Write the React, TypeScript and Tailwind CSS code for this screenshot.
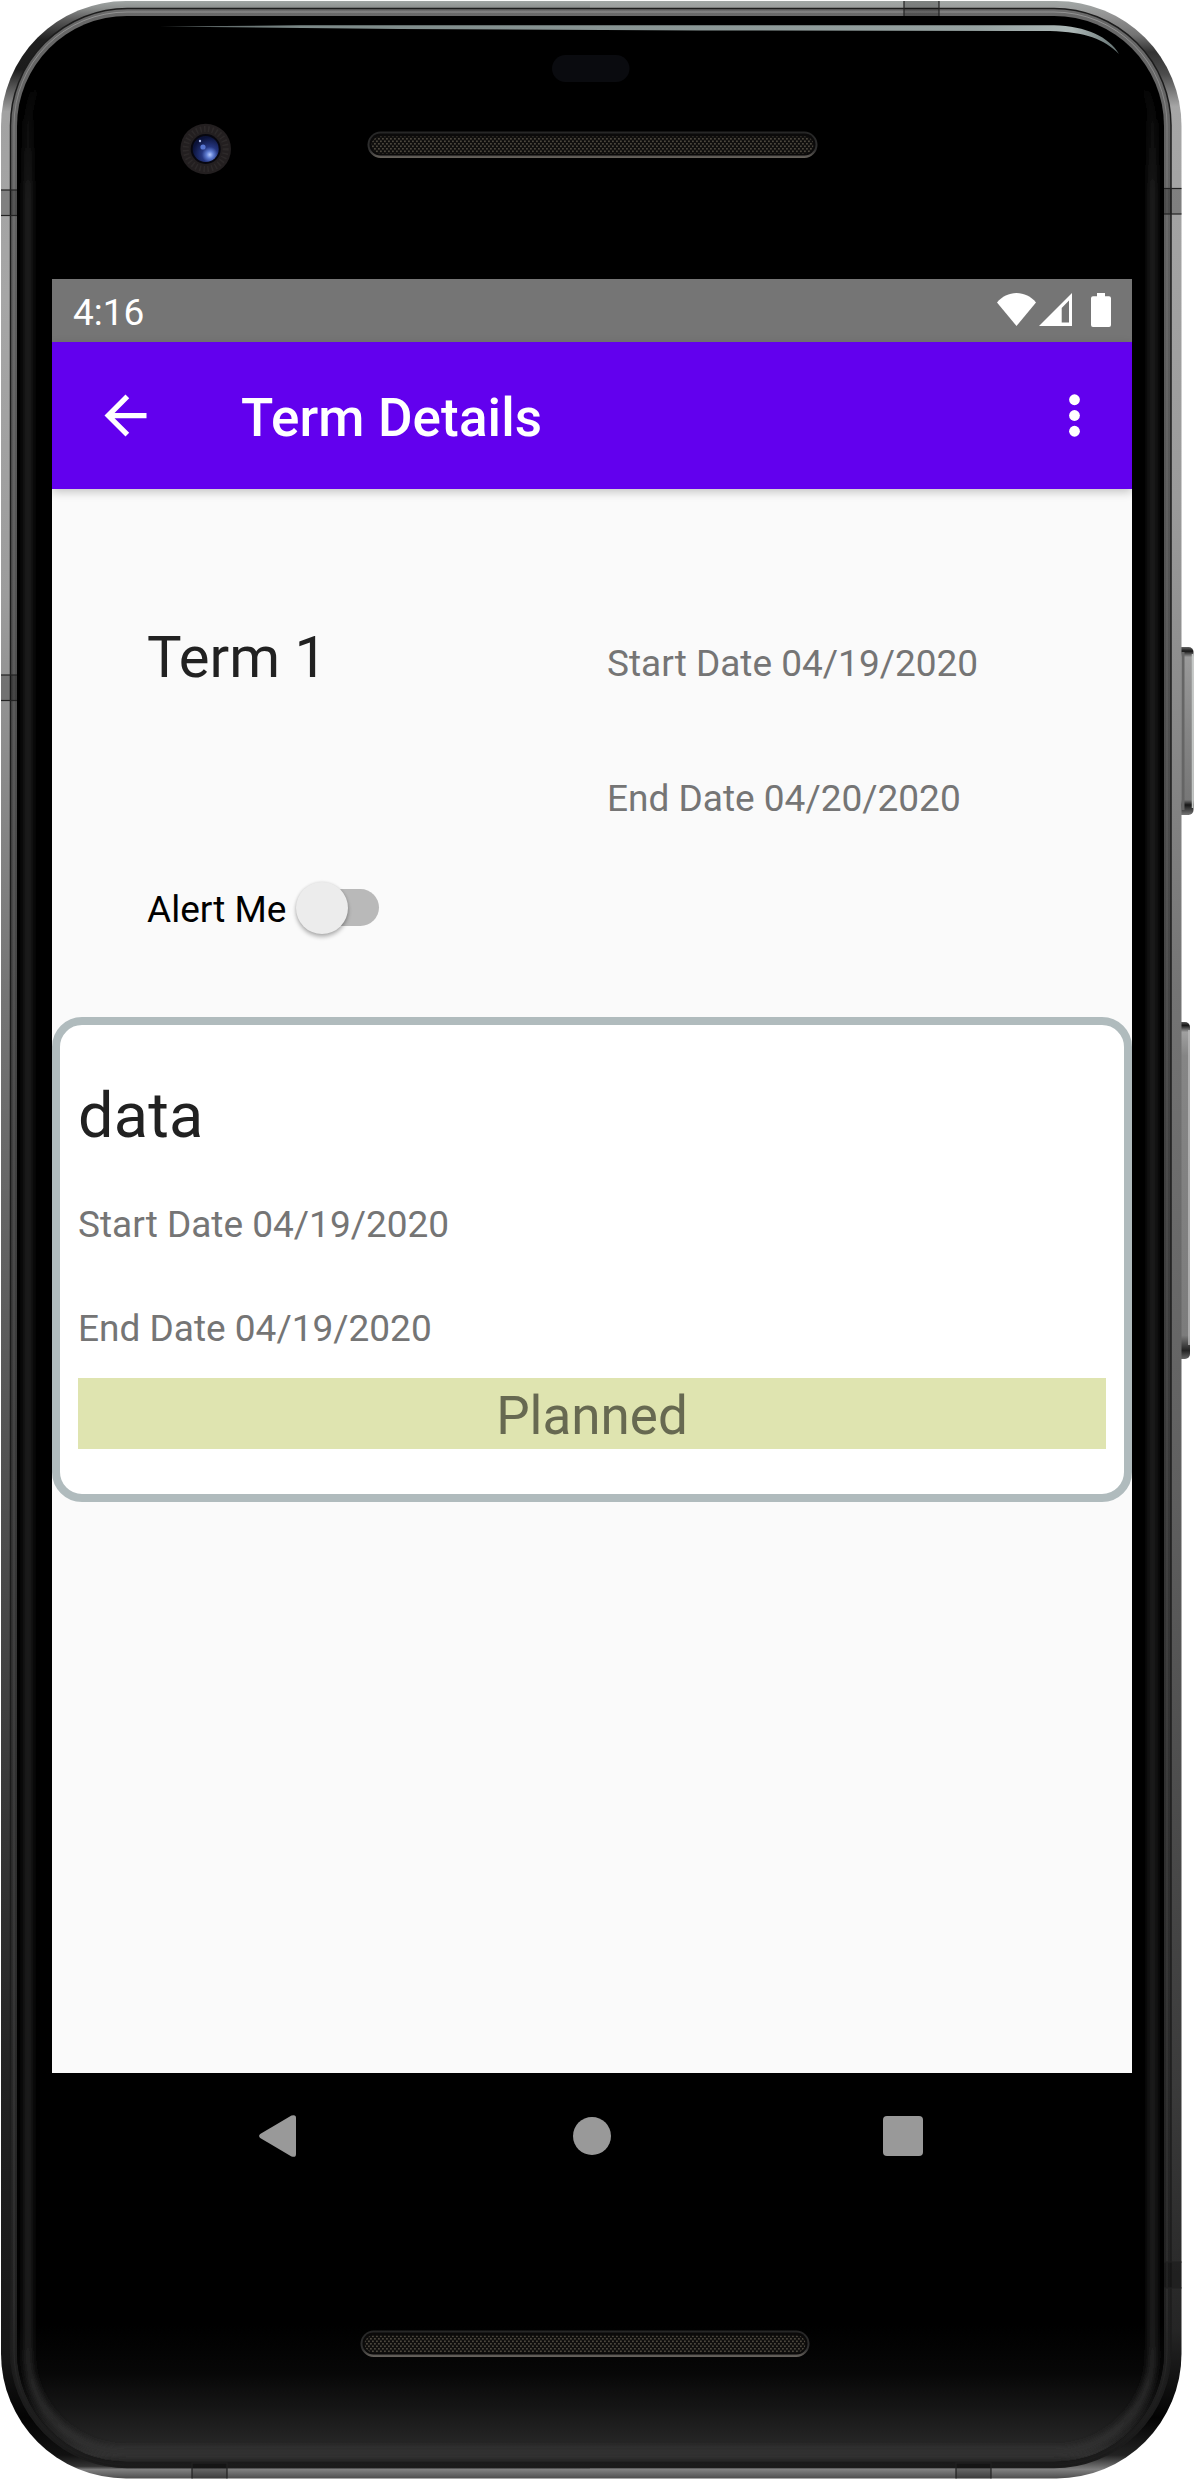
import React from "react";

function SpeakerGrille({ x, y, width }: { x: number; y: number; width: number }) {
  return (
    <g>
      <rect x={x} y={y} width={width} height="26.5" rx="13.25" fill="url(#grilleRim)" />
      <rect x={x + 2} y={y + 2} width={width - 4} height="22" rx="11" fill="#0b0a0a" />
      <rect x={x + 4} y={y + 5} width={width - 8} height="17" rx="8.5" fill="url(#mesh)" />
    </g>
  );
}

function Hardware() {
  return (
    <svg className="absolute inset-0" width="1194" height="2480" viewBox="0 0 1194 2480" aria-hidden="true">
      <defs>
        <linearGradient id="metalLeft" gradientUnits="userSpaceOnUse" x1="0" y1="0" x2="0" y2="2480">
          <stop offset="0" stopColor="#a3a9a7" />
          <stop offset="0.0032" stopColor="#8c8f8e" />
          <stop offset="0.008" stopColor="#5a5a5a" />
          <stop offset="0.016" stopColor="#1f1f1f" />
          <stop offset="0.028" stopColor="#1c1c1c" />
          <stop offset="0.045" stopColor="#a2a2a2" />
          <stop offset="0.12" stopColor="#a6a6a6" />
          <stop offset="0.24" stopColor="#9c9c9c" />
          <stop offset="0.4" stopColor="#757575" />
          <stop offset="0.6" stopColor="#505050" />
          <stop offset="0.84" stopColor="#222222" />
          <stop offset="0.95" stopColor="#161616" />
          <stop offset="0.975" stopColor="#040404" />
          <stop offset="0.99" stopColor="#111111" />
          <stop offset="0.9945" stopColor="#333333" />
          <stop offset="0.9958" stopColor="#808080" />
          <stop offset="1" stopColor="#454545" />
        </linearGradient>
        <linearGradient id="metalRight" gradientUnits="userSpaceOnUse" x1="0" y1="0" x2="0" y2="2480">
          <stop offset="0" stopColor="#a3a9a7" />
          <stop offset="0.006" stopColor="#949494" />
          <stop offset="0.014" stopColor="#747474" />
          <stop offset="0.021" stopColor="#333333" />
          <stop offset="0.03" stopColor="#4c4c4c" />
          <stop offset="0.043" stopColor="#a6a6a6" />
          <stop offset="0.2" stopColor="#9b9b9b" />
          <stop offset="0.4" stopColor="#747474" />
          <stop offset="0.6" stopColor="#606060" />
          <stop offset="0.84" stopColor="#3b3b3b" />
          <stop offset="0.94" stopColor="#252525" />
          <stop offset="0.975" stopColor="#030303" />
          <stop offset="0.99" stopColor="#222222" />
          <stop offset="0.9958" stopColor="#808080" />
          <stop offset="1" stopColor="#454545" />
        </linearGradient>
        <linearGradient id="innerRim" gradientUnits="userSpaceOnUse" x1="0" y1="0" x2="0" y2="2480">
          <stop offset="0" stopColor="#777777" />
          <stop offset="0.006" stopColor="#686868" />
          <stop offset="0.4" stopColor="#454545" />
          <stop offset="0.8" stopColor="#2c2c2c" />
          <stop offset="1" stopColor="#1a1a1a" />
        </linearGradient>
        <linearGradient id="rimLine" gradientUnits="userSpaceOnUse" x1="0" y1="0" x2="0" y2="2480">
          <stop offset="0" stopColor="#b0b0b0" stopOpacity="0.6" />
          <stop offset="0.1" stopColor="#8a8a8a" stopOpacity="0.45" />
          <stop offset="0.6" stopColor="#6a6a6a" stopOpacity="0.4" />
          <stop offset="0.93" stopColor="#555555" stopOpacity="0.4" />
          <stop offset="0.97" stopColor="#222222" stopOpacity="0.3" />
        </linearGradient>
        <linearGradient id="bottomGlow" x1="0" y1="0" x2="0" y2="1">
          <stop offset="0" stopColor="#000000" />
          <stop offset="0.35" stopColor="#070707" />
          <stop offset="0.6" stopColor="#151515" />
          <stop offset="0.85" stopColor="#252525" />
          <stop offset="0.95" stopColor="#303030" />
          <stop offset="1" stopColor="#222222" />
        </linearGradient>
        <linearGradient id="edgeGlow" gradientUnits="userSpaceOnUse" x1="0" y1="0" x2="0" y2="2480">
          <stop offset="0.03" stopColor="#222222" stopOpacity="0" />
          <stop offset="0.08" stopColor="#222222" />
          <stop offset="0.94" stopColor="#222222" />
          <stop offset="0.98" stopColor="#303030" />
        </linearGradient>
        <filter id="soften" filterUnits="userSpaceOnUse" x="0" y="0" width="1194" height="2480">
          <feGaussianBlur stdDeviation="3" />
        </filter>
        <linearGradient id="grilleRim" x1="0" y1="0" x2="0" y2="1">
          <stop offset="0" stopColor="#262626" />
          <stop offset="0.7" stopColor="#303030" />
          <stop offset="1" stopColor="#68635d" />
        </linearGradient>
        <linearGradient id="shine" gradientUnits="userSpaceOnUse" x1="160" y1="0" x2="1120" y2="0">
          <stop offset="0" stopColor="#50595a" />
          <stop offset="0.15" stopColor="#7c8988" />
          <stop offset="0.85" stopColor="#96a2a1" />
          <stop offset="0.95" stopColor="#acb7b6" />
          <stop offset="1" stopColor="#627070" />
        </linearGradient>
        <linearGradient id="button" x1="0" y1="0" x2="0" y2="1">
          <stop offset="0" stopColor="#666666" />
          <stop offset="0.025" stopColor="#161616" />
          <stop offset="0.06" stopColor="#9a9a9a" />
          <stop offset="0.5" stopColor="#858585" />
          <stop offset="0.91" stopColor="#777777" />
          <stop offset="0.94" stopColor="#161616" />
          <stop offset="1" stopColor="#777777" />
        </linearGradient>
        <linearGradient id="longButton" x1="0" y1="0" x2="0" y2="1">
          <stop offset="0" stopColor="#555555" />
          <stop offset="0.01" stopColor="#161616" />
          <stop offset="0.03" stopColor="#a0a0a0" />
          <stop offset="0.1" stopColor="#858585" />
          <stop offset="0.93" stopColor="#7c7c7c" />
          <stop offset="0.975" stopColor="#222222" />
          <stop offset="1" stopColor="#666666" />
        </linearGradient>
        <radialGradient id="lens" cx="0.66" cy="0.72" r="0.68">
          <stop offset="0" stopColor="#b5caff" />
          <stop offset="0.2" stopColor="#5f7dd2" />
          <stop offset="0.45" stopColor="#25367f" />
          <stop offset="1" stopColor="#0b1238" />
        </radialGradient>
        <pattern id="mesh" width="4" height="5" patternUnits="userSpaceOnUse">
          <rect width="4" height="5" fill="#100f0e" />
          <rect x="0" y="0.5" width="1.8" height="1.6" fill="#4c473d" />
          <rect x="2" y="3" width="1.8" height="1.6" fill="#4c473d" />
        </pattern>
        <clipPath id="leftHalf"><rect x="0" y="0" width="590" height="2480" /></clipPath>
        <clipPath id="rightHalf"><rect x="590" y="0" width="604" height="2480" /></clipPath>
        <clipPath id="body"><rect x="1" y="1" width="1180.5" height="2477.5" rx="125" /></clipPath>
        <clipPath id="glass"><rect x="17" y="16" width="1147" height="2446" rx="110" /></clipPath>
      </defs>

      <rect x="1176" y="647" width="17.5" height="168" rx="5" fill="url(#button)" />
      <path d="M1183 652V810" stroke="#656565" strokeWidth="3" />
      <path d="M1192.5 654V808" stroke="#c4c8c6" strokeWidth="1.5" />
      <rect x="1176" y="1022" width="14" height="337" rx="5" fill="url(#longButton)" />
      <path d="M1189 1030V1345" stroke="#bcbcbc" strokeWidth="1.5" />

      <rect x="1" y="1" width="1180.5" height="2477.5" rx="125" fill="url(#metalLeft)" clipPath="url(#leftHalf)" />
      <rect x="1" y="1" width="1180.5" height="2477.5" rx="125" fill="url(#metalRight)" clipPath="url(#rightHalf)" />
      <rect x="10.5" y="8.5" width="1160.5" height="2459" rx="117" fill="url(#innerRim)" stroke="#1c1c1c" strokeWidth="1.5" />
      <rect x="14" y="12" width="1153" height="2453" rx="113" fill="none" stroke="url(#rimLine)" strokeWidth="1" />

      <g clipPath="url(#body)" fill="#000" fillOpacity="0.22" stroke="#222222" strokeWidth="1.2">
        <rect x="-3" y="190" width="22" height="25.5" />
        <rect x="-3" y="675" width="22" height="25.5" />
        <rect x="1163" y="188.5" width="26" height="25.5" />
        <rect x="1163" y="2262" width="26" height="26" />
        <rect x="904" y="-3" width="35" height="20" />
        <rect x="192" y="2463" width="35" height="20" />
        <rect x="956" y="2463" width="35" height="20" />
      </g>

      <rect x="17" y="16" width="1147" height="2446" rx="110" fill="#000000" />
      <g clipPath="url(#glass)">
        <rect x="17" y="2325" width="1147" height="137" fill="url(#bottomGlow)" />
        <rect x="28" y="28" width="1124.5" height="2424" rx="98" fill="none" stroke="url(#edgeGlow)" strokeWidth="8" filter="url(#soften)" />
      </g>
      <path d="M160 26.5L300 25.3H1054C1086 26 1109 37 1119 54C1104 39 1086 32 1050 31L700 30.4L400 29Z" fill="url(#shine)" />

      <rect x="552" y="55" width="77.5" height="27" rx="13.5" fill="#0a0b0f" />
      <circle cx="205.7" cy="149" r="25.3" fill="#231f20" />
      <circle cx="205.7" cy="149" r="20" fill="none" stroke="#343030" strokeWidth="6" strokeDasharray="1.5 2.5" strokeOpacity="0.6" />
      <circle cx="205.7" cy="149" r="15" fill="#07070f" />
      <circle cx="205.7" cy="149" r="13" fill="url(#lens)" />
      <circle cx="203" cy="147" r="2.6" fill="#5876d0" />
      <circle cx="200" cy="141" r="1.2" fill="#a9b8e6" />
      <SpeakerGrille x={367.5} y={131.5} width={450} />
      <SpeakerGrille x={360.5} y={2330.5} width={449} />
    </svg>
  );
}

function StatusBar() {
  return (
    <div className="flex h-[63px] items-start justify-between bg-[#757575] pl-[21px] text-[37px] text-white">
      <span className="pt-[2px] leading-[63px]">4:16</span>
      <div className="flex pt-[14px] pr-[21px]">
        <svg className="mr-[3px]" width="39" height="34" viewBox="0 0 39 34" fill="#fff">
          <path d="M0 9.5C5 3.5 12 0 19.5 0S34 3.5 39 9.5L19.5 33Z" />
        </svg>
        <svg className="mr-[19px]" width="33" height="33" viewBox="0 0 33 33" fill="#fff">
          <path fillRule="evenodd" d="M33 0V33H0ZM30 7.5L22.7 15V29.5H30Z" />
        </svg>
        <svg width="20" height="34" viewBox="0 0 20 34" fill="#fff">
          <path d="M6 0H14V3.3H18Q20 3.3 20 5.3V32Q20 34 18 34H2Q0 34 0 32V5.3Q0 3.3 2 3.3H6Z" />
        </svg>
      </div>
    </div>
  );
}

function AppBar() {
  return (
    <header className="relative flex h-[147px] items-center bg-[#6200ee] pl-[42px] pr-[26px] text-white shadow-[0_3px_9px_rgba(0,0,0,0.22)]">
      <svg width="63" height="63" viewBox="0 0 24 24" fill="currentColor">
        <path d="M20 11H7.83l5.59-5.59L12 4l-8 8 8 8 1.41-1.41L7.83 13H20v-2z" />
      </svg>
      <h1 className="ml-[84px] flex-1 pt-[5px] text-[53px] font-medium leading-[62px] tracking-[0.12px]">Term Details</h1>
      <svg width="63" height="63" viewBox="0 0 24 24" fill="currentColor">
        <circle cx="12" cy="6" r="2.05" />
        <circle cx="12" cy="12" r="2.05" />
        <circle cx="12" cy="18" r="2.05" />
      </svg>
    </header>
  );
}

function TermSummary() {
  return (
    <section className="h-[528px] pl-[95px] pt-[134px]">
      <div className="flex h-[265px]">
        <h2 className="w-[460px] text-[58px] leading-[68px] text-[#212121]">Term 1</h2>
        <div className="flex flex-col gap-[92px] pt-[19px] text-[37px] leading-[43px] text-[#757575]">
          <p>Start Date 04/19/2020</p>
          <p>End Date 04/20/2020</p>
        </div>
      </div>
      <div className="flex items-start">
        <span className="w-[149px] whitespace-nowrap text-[37px] leading-[43px] text-black">Alert Me</span>
        <div className="mt-[1px] ml-[6px] flex h-[37px] w-[77px] items-center rounded-full bg-[#b9b9b9]">
          <div className="-ml-[6px] size-[52px] shrink-0 rounded-full bg-[#ececec] shadow-[0_3px_4px_rgba(0,0,0,0.28),0_0_3px_rgba(0,0,0,0.12)]" />
        </div>
      </div>
    </section>
  );
}

function CourseCard() {
  return (
    <article className="h-[485px] rounded-[30px] border-8 border-[#b0bbbd] bg-white px-[18px] pt-[54px]">
      <h2 className="text-[63px] leading-[74px] tracking-[0.2px] text-[#212121]">data</h2>
      <p className="mt-[50px] text-[37px] leading-[43px] text-[#757575]">Start Date 04/19/2020</p>
      <p className="mt-[61px] text-[37px] leading-[43px] text-[#757575]">End Date 04/19/2020</p>
      <div className="mt-[28px] h-[71px] bg-[#dfe4b0] pt-[3px] text-center text-[53px] leading-[71px] text-[#676951]">
        Planned
      </div>
    </article>
  );
}

function NavigationBar() {
  return (
    <nav className="flex h-[126px] items-center pl-[207px] text-[#999999]">
      <svg width="37" height="42" viewBox="0 0 37 42" fill="currentColor">
        <path d="M1.2 19L32.5 0.6Q37 -1 37 3V39Q37 43 32.5 41.4L1.2 23Q-1 21 1.2 19Z" />
      </svg>
      <div className="ml-[277px] size-[38px] rounded-full bg-current" />
      <div className="ml-[272px] size-[40px] rounded-[4px] bg-current" />
    </nav>
  );
}

export default function App() {
  return (
    <div className="relative h-[2480px] w-[1194px] overflow-hidden bg-white font-['Roboto',sans-serif]">
      <Hardware />
      <div className="relative ml-[52px] w-[1080px] pt-[279px]">
        <main className="h-[1794px] bg-[#fafafa]">
          <StatusBar />
          <AppBar />
          <TermSummary />
          <CourseCard />
        </main>
        <NavigationBar />
      </div>
    </div>
  );
}
